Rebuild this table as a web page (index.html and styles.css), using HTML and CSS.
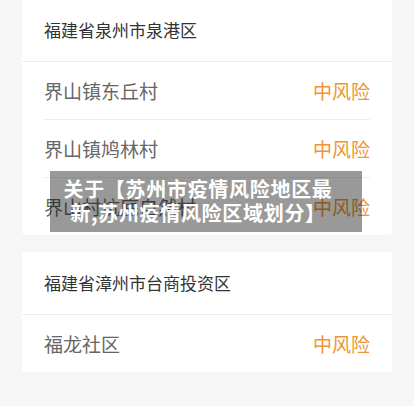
FILE: index.html
```html
<!DOCTYPE html>
<html lang="zh-CN">
<head>
  <meta charset="UTF-8" />
  <meta name="viewport" content="width=device-width, initial-scale=1" />
  <title>苏州市疫情风险地区</title>
  <link rel="stylesheet" href="styles.css">
</head>
<body>
  <div class="list">
    <div class="card card-first">
      <div class="card-head">福建省泉州市泉港区</div>
      <div class="row"><div class="row-inner"><span class="place">界山镇东丘村</span><span class="risk">中风险</span></div></div>
      <div class="row"><div class="row-inner"><span class="place">界山镇鸠林村</span><span class="risk">中风险</span></div></div>
      <div class="row"><div class="row-inner"><span class="place">界山村坑底自然村</span><span class="risk">中风险</span></div></div>
    </div>

    <div class="card">
      <div class="card-head">福建省漳州市台商投资区</div>
      <div class="row"><div class="row-inner"><span class="place">福龙社区</span><span class="risk">中风险</span></div></div>
    </div>

    <div class="title-tag">关于【苏州市疫情风险地区最新,苏州疫情风险区域划分】</div>
  </div>
</body>
</html>
```

FILE: styles.css
```css
body {
  font-family: "Noto Sans CJK SC", "Noto Sans", sans-serif;
  background: #f6f6f6;
  margin: 0;
  padding: 0;
}

.list {
  position: relative;
  padding: 0 22px;
}

.card {
  background: white;
  border-radius: 4px;
  margin-bottom: 17px;
}

.card-first {
  margin-top: -1px;
  border-top-left-radius: 0;
  border-top-right-radius: 0;
}

.card-head {
  height: 62px;
  line-height: 62px;
  padding: 0 22px;
  font-size: 17px;
  color: #333;
  border-bottom: 1px solid #eeeeee;
}

.row {
  padding: 0 22px;
}

.row-inner {
  display: flex;
  justify-content: space-between;
  align-items: center;
  height: 57px;
  border-bottom: 1px solid #eeeeee;
  font-size: 19px;
}

.row:last-child .row-inner {
  border-bottom: none;
}

.place {
  color: #666;
}

.risk {
  color: #f0952f;
}

.title-tag {
  position: absolute;
  left: 50px;
  top: 172px;
  width: 272px;
  padding: 6px 28px 7px 12px;
  background: rgba(0, 0, 0, 0.4);
  color: white;
  font-weight: bold;
  font-size: 20px;
  letter-spacing: 0.7px;
  line-height: 24px;
  text-align: center;
}
```
